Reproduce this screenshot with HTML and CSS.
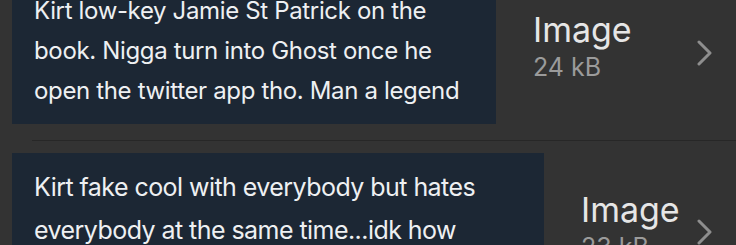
FILE: index.html
```html
<!DOCTYPE html>
<html>
<head>
<meta charset="utf-8">
<link rel="stylesheet" href="styles.css">
</head>
<body>
<div class="list">
  <div class="row">
    <div class="card card-a">
      <p class="tweet tweet-a">Kirt low-key Jamie St Patrick on the<br>book. Nigga turn into Ghost once he<br>open the twitter app tho. Man a legend</p>
    </div>
    <div class="info">
      <div class="title">Image</div>
      <div class="size">24 kB</div>
    </div>
    <svg class="chev" width="15" height="26" viewBox="0 0 15 26"><polyline points="2,2 13,13 2,24" fill="none" stroke="#8e8e8e" stroke-width="3" stroke-linecap="round" stroke-linejoin="round"/></svg>
  </div>
  <div class="sep"></div>
  <div class="row">
    <div class="card card-b">
      <p class="tweet tweet-b">Kirt fake cool with everybody but hates<br>everybody at the same time...idk how<br>he does it but he does it well</p>
    </div>
    <div class="info">
      <div class="title">Image</div>
      <div class="size">23 kB</div>
    </div>
    <svg class="chev" width="15" height="26" viewBox="0 0 15 26"><polyline points="2,2 13,13 2,24" fill="none" stroke="#8e8e8e" stroke-width="3" stroke-linecap="round" stroke-linejoin="round"/></svg>
  </div>
</div>
</body>
</html>
```
FILE: styles.css
```css
html, body {
  margin: 0;
  padding: 0;
  background: #333333;
  overflow: hidden;
  font-family: Inter, "Open Sans", sans-serif;
}
.list {
  margin-top: -34px;
}
.row {
  display: flex;
  align-items: center;
  padding: 12px 24px 16px 12px;
}
.sep {
  height: 1px;
  margin-left: 32px;
  background: #272727;
}
.card {
  flex: none;
  background: #1c2734;
  box-sizing: border-box;
  padding: 13px 0 13px 22px;
}
.card-a { width: 484px; }
.card-b { width: 532px; }
.tweet {
  margin: 0;
  color: #eef0f2;
  white-space: nowrap;
}
.tweet-a {
  font-size: 24px;
  line-height: 40px;
  letter-spacing: -0.35px;
}
.tweet-b {
  font-size: 25px;
  line-height: 43px;
  letter-spacing: -0.55px;
}
.info {
  margin-left: 37px;
  padding-bottom: 6px;
}
.title {
  font-size: 34px;
  line-height: 38px;
  color: #e6e6e6;
}
.size {
  font-size: 25px;
  line-height: 36px;
  color: #9b9b9b;
}
.chev {
  margin-left: auto;
  margin-top: 3px;
  flex: none;
}
```
